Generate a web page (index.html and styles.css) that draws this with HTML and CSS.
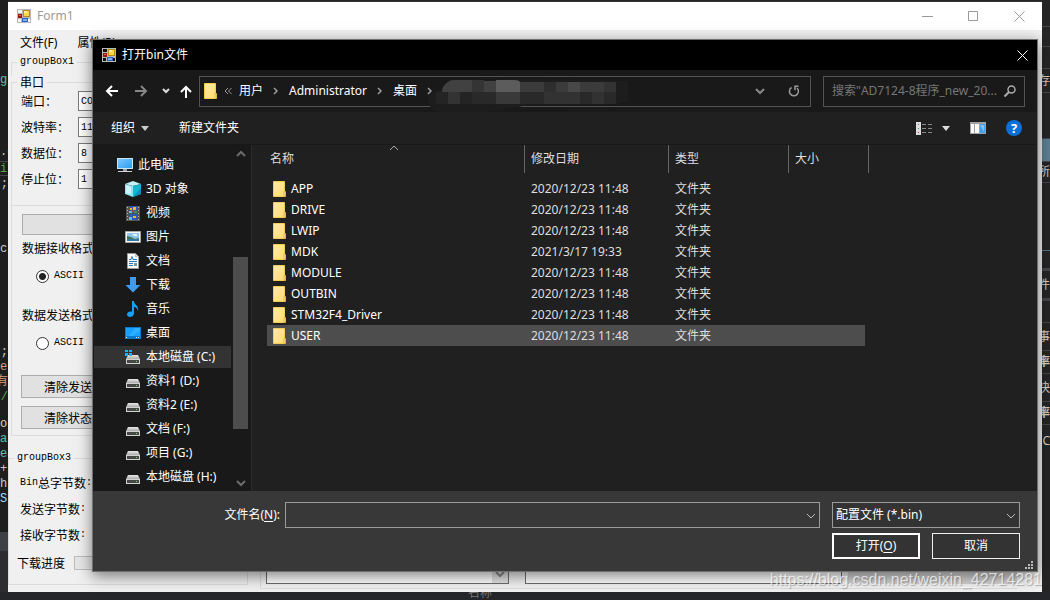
FILE: index.html
```html
<!DOCTYPE html>
<html lang="zh-CN">
<head>
<meta charset="utf-8">
<title>打开bin文件</title>
<link rel="stylesheet" href="styles.css">
</head>
<body>
<svg class="defs" aria-hidden="true">
  <defs>
    <linearGradient id="gFolder" x1="0" y1="0" x2="1" y2="1"><stop offset="0" stop-color="#ffeba8"/><stop offset="1" stop-color="#ffdc70"/></linearGradient>
    <linearGradient id="gScreen" x1="0" y1="0" x2="1" y2="1"><stop offset="0" stop-color="#7cc8ff"/><stop offset="1" stop-color="#2c9df0"/></linearGradient>
    <linearGradient id="gDrive" x1="0" y1="0" x2="0" y2="1"><stop offset="0" stop-color="#e8e8e8"/><stop offset="1" stop-color="#a9a9a9"/></linearGradient>
  </defs>
  <symbol id="app" viewBox="0 0 14 14">
    <path fill="#b9b9b9" d="M0 0h14v14H0z"/><path fill="#101010" d="M1 1h4v3H1zM1 10h3v3H1zM11 10h2v3h-2z"/>
    <path fill="#b78a10" d="M6 1h7v7H6z"/><path fill="#ffd84a" d="M7 2h5v5H7z"/><path fill="#fff0a0" d="M7 2h3v2H7z"/>
    <path fill="#9c1512" d="M1 5h4v4H1z"/><path fill="#e06a50" d="M2 6h2v1H2z"/>
    <path fill="#2c62c4" d="M5 9h6v4H5z"/><path fill="#79aef5" d="M6 10h4v2H6z"/>
  </symbol>
  <symbol id="applight" viewBox="0 0 14 14">
    <path fill="#b9b9b9" d="M0 0h14v14H0z"/><path fill="#f4f4f4" d="M1 1h4v3H1zM1 10h3v3H1zM11 10h2v3h-2z"/>
    <path fill="#b78a10" d="M6 1h7v7H6z"/><path fill="#ffd84a" d="M7 2h5v5H7z"/><path fill="#fff0a0" d="M7 2h3v2H7z"/>
    <path fill="#9c1512" d="M1 5h4v4H1z"/><path fill="#e06a50" d="M2 6h2v1H2z"/>
    <path fill="#2c62c4" d="M5 9h6v4H5z"/><path fill="#79aef5" d="M6 10h4v2H6z"/>
  </symbol>
  <symbol id="folder" viewBox="0 0 13 16">
    <path fill="url(#gFolder)" stroke="#f3cd50" d="M.5.5h11v15H.5z"/><path fill="#ffe79a" stroke="#dfb640" d="M11 10.500h1.500v5H11z"/>
  </symbol>
  <symbol id="pc" viewBox="0 0 16 16">
    <path fill="#c9e6f8" d="M0 1h16v11H0z"/><path fill="url(#gScreen)" d="M1 2h14v9H1z"/><path fill="#9aa4ac" d="M6 12h4v2H6z"/><path fill="#cdd3d7" d="M1 14h14v1H1z"/>
  </symbol>
  <symbol id="cube" viewBox="0 0 16 16">
    <path fill="#bff1f6" d="M0 3l8-3 8 3-8 2z"/><path fill="#8ee6ee" d="M0 3l8 2v11l-8-3z"/><path fill="#e3fafc" d="M1 4l5 2v7l-5-1z" opacity=".7"/><path fill="#14b8cf" d="M16 3L8 5v11l8-3z"/><path fill="#0a8fc4" d="M16 7l-8 9 8-3z"/>
  </symbol>
  <symbol id="video" viewBox="0 0 16 16">
    <path fill="#545454" d="M1 1h14v15H1z"/><path fill="#b8b8b8" d="M2 2h1v1H2zM2 5h1v1H2zM2 8h1v1H2zM2 11h1v1H2zM2 14h1v1H2zM13 2h1v1h-1zM13 5h1v1h-1zM13 8h1v1h-1zM13 11h1v1h-1zM13 14h1v1h-1z"/>
    <path fill="#3157b4" d="M4 1h8v7H4zM4 9h8v6H4z"/><path fill="#f0bc24" d="M5 3h2v2H5zM8 2h3v3H8zM8 11h3v2H8z"/><path fill="#be3c2c" d="M7 5h2v2H7z"/><path fill="#59c2ed" d="M4 6h3v2H4zM4 12h3v3H4z"/><path fill="#3c9848" d="M9 6h3v2H9z"/>
  </symbol>
  <symbol id="picture" viewBox="0 0 16 16">
    <path fill="#f6f6f6" stroke="#a5a5a5" d="M.5 2.500h15v11H.5z"/><path fill="#8fc5ed" d="M2 4h12v8H2z"/><path fill="#3b7454" d="M2 7l4 1 4 2 4-1v3H2z"/><path fill="#3676a2" d="M2 10h12v2H2z"/><path fill="#e8f4fc" d="M7 5h5v2H9z"/>
  </symbol>
  <symbol id="document" viewBox="0 0 16 16">
    <path fill="#fafafa" stroke="#9b9b9b" d="M2.500.5h8l3 3v12h-11z"/><path fill="#bbb" d="M10 1v3h3z"/><path stroke="#247ac4" fill="none" d="M4 6.500h2l1-3 1 3h4M4 8.500h8M4 10.500h4M4 12.500h4"/><path fill="#6d9a9c" d="M9 10h3v3H9z"/>
  </symbol>
  <symbol id="download" viewBox="0 0 16 16"><path fill="#3d9cf0" d="M5 0h6v8h4.500L8 15.500.5 8H5z"/></symbol>
  <symbol id="music" viewBox="0 0 16 16"><path fill="#18a0f2" d="M7 0h2c0 4 5 4 4 10-1-3-2-4-4-4v6c0 5-7 5-7 1.500C2 11 5 10 7 11z"/></symbol>
  <symbol id="desktop" viewBox="0 0 16 16"><path fill="#0c7bd0" d="M0 2h16v12H0z"/><path fill="#15a2ff" d="M1 3h14v8H1z"/><path fill="#4bb9ff" d="M10 3h5v3l-7 5H4z" opacity=".5"/><path fill="#d4f0ff" d="M1 12h1v1H1zM11 12h1v1h-1zM13 12h1v1h-1z"/></symbol>
  <symbol id="drive" viewBox="0 0 16 16"><path fill="url(#gDrive)" d="M3 6h10l2 4H1z"/><path fill="#d2d2d2" d="M1 10h14v5H1z"/><path fill="#474747" d="M2 11h12v3H2z"/><path fill="#52e852" d="M11 12h1v1h-1z"/></symbol>
  <symbol id="sysdrive" viewBox="0 0 16 16"><use href="#drive"/><path fill="#1eb4f4" d="M0 1h3v2H0zM4 1h3v2H4zM0 4h3v3H0zM4 4h3v3H4z"/></symbol>
  <symbol id="down" viewBox="0 0 10 6"><path fill="none" stroke="currentColor" d="M1 1l4 4 4-4"/></symbol>
  <symbol id="up" viewBox="0 0 10 6"><path fill="none" stroke="currentColor" d="M1 5l4-4 4 4"/></symbol>
  <symbol id="downbold" viewBox="0 0 10 7"><path fill="none" stroke="currentColor" stroke-width="2" d="M1 1l4 4 4-4"/></symbol>
  <symbol id="upbold" viewBox="0 0 10 7"><path fill="none" stroke="currentColor" stroke-width="2" d="M1 6l4-4 4 4"/></symbol>
  <symbol id="right" viewBox="0 0 6 8"><path fill="none" stroke="currentColor" stroke-width="1.500" d="M1 1l3 3-3 3"/></symbol>
  <symbol id="cross" viewBox="0 0 11 11"><path fill="none" stroke="currentColor" d="M.5.5l10 10M10.500.5l-10 10"/></symbol>
</svg>

<div class="desktop">
  <div class="editor">
    <div class="code teal first">g(</div>
    <div class="code white after">.c</div>
    <div class="code green current">il</div>
    <div class="code white end">;</div>
    <div class="code white far">c</div>
    <div class="code white farther end">;</div>
    <div class="code orange">er</div>
    <div class="code orange end">有</div>
    <div class="code green end">/</div>
    <div class="code yellow gap">ou</div>
    <div class="code teal">an</div>
    <div class="code teal">ea</div>
    <div class="code white">+(</div>
    <div class="code white">h;</div>
    <div class="code blue">St</div>
    <div class="band"></div>
    <div class="dock"></div>
  </div>

  <main class="form">
    <header class="form-title">
      <svg class="appicon"><use href="#applight"/></svg><span>Form1</span>
      <div class="window-buttons">
        <button aria-label="最小化"><svg width="11" height="11"><path stroke="currentColor" d="M0 5.500h11"/></svg></button>
        <button aria-label="最大化"><svg width="11" height="11"><path fill="none" stroke="currentColor" d="M.5.5h9v9H.5z"/></svg></button>
        <button aria-label="关闭"><svg width="11" height="11"><use href="#cross"/></svg></button>
      </div>
    </header>
    <nav class="menu"><button>文件(F)</button><button>属性(P)</button></nav>
    <div class="form-body">
      <div class="settings">
        <fieldset class="box box-outer"><legend class="mono">groupBox1</legend></fieldset>
        <fieldset class="box serial">
          <legend>串口</legend>
          <div class="field"><label for="port">端口：</label><input id="port" value="COM1"></div>
          <div class="field"><label for="baud">波特率：</label><input id="baud" value="115200"></div>
          <div class="field"><label for="bits">数据位：</label><input id="bits" value="8"></div>
          <div class="field"><label for="stop">停止位：</label><input id="stop" value="1"></div>
        </fieldset>
        <div class="formats">
          <button class="classic" aria-label="打开串口"></button>
          <p class="caption">数据接收格式</p>
          <label class="radio"><input type="radio" name="rx" checked><span class="mono">ASCII</span></label>
          <p class="caption caption-next">数据发送格式</p>
          <label class="radio"><input type="radio" name="tx"><span class="mono">ASCII</span></label>
          <button class="classic clear">清除发送</button>
          <button class="classic state">清除状态</button>
        </div>
        <fieldset class="box counters">
          <legend class="mono">groupBox3</legend>
          <div class="count"><span class="mono">Bin</span>总字节数<span class="mono">:</span></div>
          <div class="count">发送字节数<span class="mono">:</span></div>
          <div class="count">接收字节数<span class="mono">:</span></div>
          <div class="count download"><span>下载进度</span><div class="track"></div></div>
        </fieldset>
      </div>
      <div class="logs">
        <div class="log log-a"><div class="log-scroll"><svg width="10" height="7"><use href="#downbold"/></svg></div></div>
        <div class="log log-b"></div>
        <button class="send">Send发送</button>
      </div>
    </div>
  </main>

  <aside class="panel">
    <div class="cell c1"></div><div class="cell c2"></div><div class="cell c3"></div><div class="cell c4">存</div>
    <div class="cell c5"></div><div class="cell c6"></div><div class="cell c7">所</div><div class="cell c8"></div>
    <div class="cell c9"></div><div class="cell c10">件</div><div class="cell c11"></div><div class="cell c12">事</div>
    <div class="cell c13">率</div><div class="cell c12">快</div><div class="cell c13">率</div><div class="cell c14">C</div>
  </aside>
  <footer class="taskline"><span>名称</span></footer>

  <section class="dialog" role="dialog" aria-labelledby="dlg-title">
    <header class="dialog-title">
      <svg class="appicon"><use href="#app"/></svg><span id="dlg-title">打开bin文件</span>
      <button class="close" aria-label="关闭"><svg width="11" height="11"><use href="#cross"/></svg></button>
    </header>

    <div class="navbar">
      <div class="arrows">
        <button aria-label="后退"><svg width="14" height="12"><path fill="none" stroke="#fff" stroke-width="2" d="M13 6H2M7 1L2 6l5 5"/></svg></button>
        <button aria-label="前进"><svg width="14" height="12"><path fill="none" stroke="#868686" stroke-width="2" d="M0 6h11M6 1l5 5-5 5"/></svg></button>
        <button aria-label="最近"><svg width="8" height="6"><path fill="none" stroke="#ddd" stroke-width="2" d="M1 1l3 3 3-3"/></svg></button>
        <button aria-label="上移"><svg width="12" height="13"><path fill="none" stroke="#fff" stroke-width="2" d="M6 13V2M1 7l5-5 5 5"/></svg></button>
      </div>
      <div class="address">
        <svg class="folder"><use href="#folder"/></svg>
        <svg class="laquo" width="8" height="8"><path fill="none" stroke="#9a9a9a" d="M4 1L1 4l3 3M7.500 1l-3 3 3 3"/></svg>
        <button class="crumb">用户</button><svg class="sep"><use href="#right"/></svg>
        <button class="crumb">Administrator</button><svg class="sep"><use href="#right"/></svg>
        <button class="crumb">桌面</button><svg class="sep"><use href="#right"/></svg>
        <svg class="mosaic" viewBox="0 0 212 36" aria-hidden="true">
          <path fill="#1d1d1d" d="M0 21q0-6 10-8l10-10Q100 0 200 3v20l-10 3-90 1q-20 4-42 7H12Q0 32 0 21z"/>
          <path fill="#414141" d="M20 4q2-2 5-2h19v12H14q0-6 6-10zM56 3h12v11H56z"/>
          <path fill="#343434" d="M44 2h12v12H44z"/><path fill="#5c5c5c" d="M68 2h18q5 0 6 2v10H68z"/>
          <path fill="#3b3b3b" d="M92 4h24v10H92zM128 4h60v10h-60z"/><path fill="#2e2e2e" d="M116 4h12v10h-12z"/>
          <path fill="#484848" d="M140 4h12v10h-12z"/><path fill="#333" d="M176 4h12v10h-12z"/>
          <path fill="#242424" d="M8 14h84v12H8z"/><path fill="#333" d="M20 14h12v12H20z"/><path fill="#292929" d="M44 14h24v12H44zM92 14h96v12H92z"/>
          <path fill="#393939" d="M68 14h24v12H68z"/><path fill="#323232" d="M116 14h36v12h-36zM164 14h12v12h-12z"/>
        </svg>
        <button class="drop" aria-label="历史"><svg width="10" height="7"><use href="#downbold"/></svg></button>
        <button class="refresh" aria-label="刷新"><svg width="12" height="12"><path fill="none" stroke="#999" stroke-width="1.500" d="M3.500 2.500A4.500 4.500 0 1 0 9 3M10.500 1.200H7v4"/></svg></button>
      </div>
      <div class="search">
        <input type="text" aria-label="搜索" placeholder='搜索"AD7124-8程序_new_20...'>
        <svg width="12" height="12"><circle cx="7.500" cy="4.500" r="3.500" fill="none" stroke="#aaa" stroke-width="1.500"/><path stroke="#aaa" stroke-width="2" d="M5 7l-4.500 4.500"/></svg>
      </div>
    </div>

    <div class="toolbar">
      <button>组织<svg width="8" height="5"><path fill="#ccc" d="M0 0h8L4 5z"/></svg></button>
      <button>新建文件夹</button>
      <div class="tools">
        <button class="view" aria-label="更改视图"><svg width="16" height="13"><path fill="#ddd" d="M0 0h5v13H0z"/><path fill="#3e7fc0" d="M2 2h1v1H2zM2 6h1v1H2z"/><path fill="#a33" d="M2 10h1v1H2z"/><path stroke="#888" d="M6 2.500h4M12 2.500h4M6 6.500h4M12 6.500h4M6 10.500h4M12 10.500h4"/></svg><svg width="8" height="5"><path fill="#ddd" d="M0 0h8L4 5z"/></svg></button>
        <button aria-label="预览窗格"><svg width="16" height="12"><path fill="#a2a2a2" d="M0 0h16v12H0z"/><path fill="#fafafa" d="M1 2h3v9H1zM5 2h4v9H5z"/><path fill="#41a0ea" d="M10 2h5v9h-5z"/><path fill="#80c4fb" d="M10 3h4v7z"/></svg></button>
        <button class="help" aria-label="帮助">?</button>
      </div>
    </div>

    <div class="explorer">
      <nav class="tree">
        <ul>
          <li class="root"><svg><use href="#pc"/></svg>此电脑</li>
          <li><svg><use href="#cube"/></svg>3D 对象</li>
          <li><svg><use href="#video"/></svg>视频</li>
          <li><svg><use href="#picture"/></svg>图片</li>
          <li><svg><use href="#document"/></svg>文档</li>
          <li><svg><use href="#download"/></svg>下载</li>
          <li><svg><use href="#music"/></svg>音乐</li>
          <li><svg><use href="#desktop"/></svg>桌面</li>
          <li class="active"><svg><use href="#sysdrive"/></svg>本地磁盘 (C:)</li>
          <li><svg><use href="#drive"/></svg>资料1 (D:)</li>
          <li><svg><use href="#drive"/></svg>资料2 (E:)</li>
          <li><svg><use href="#drive"/></svg>文档 (F:)</li>
          <li><svg><use href="#drive"/></svg>项目 (G:)</li>
          <li><svg><use href="#drive"/></svg>本地磁盘 (H:)</li>
        </ul>
        <div class="scrollbar">
          <svg width="10" height="7"><use href="#upbold"/></svg>
          <div class="rail"><div class="thumb"></div></div>
          <svg width="10" height="7"><use href="#downbold"/></svg>
        </div>
      </nav>
      <div class="files">
        <svg class="sort" width="10" height="6"><use href="#up"/></svg>
        <table>
          <colgroup><col class="col-name"><col class="col-date"><col class="col-type"><col class="col-size"></colgroup>
          <thead><tr><th>名称</th><th>修改日期</th><th>类型</th><th>大小</th></tr></thead>
          <tbody>
            <tr class="spacer"><td colspan="4"></td></tr>
            <tr><td><svg class="folder"><use href="#folder"/></svg>APP</td><td>2020/12/23 11:48</td><td>文件夹</td><td></td></tr>
            <tr><td><svg class="folder"><use href="#folder"/></svg>DRIVE</td><td>2020/12/23 11:48</td><td>文件夹</td><td></td></tr>
            <tr><td><svg class="folder"><use href="#folder"/></svg>LWIP</td><td>2020/12/23 11:48</td><td>文件夹</td><td></td></tr>
            <tr><td><svg class="folder"><use href="#folder"/></svg>MDK</td><td>2021/3/17 19:33</td><td>文件夹</td><td></td></tr>
            <tr><td><svg class="folder"><use href="#folder"/></svg>MODULE</td><td>2020/12/23 11:48</td><td>文件夹</td><td></td></tr>
            <tr><td><svg class="folder"><use href="#folder"/></svg>OUTBIN</td><td>2020/12/23 11:48</td><td>文件夹</td><td></td></tr>
            <tr><td><svg class="folder"><use href="#folder"/></svg>STM32F4_Driver</td><td>2020/12/23 11:48</td><td>文件夹</td><td></td></tr>
            <tr class="selected"><td><svg class="folder"><use href="#folder"/></svg>USER</td><td>2020/12/23 11:48</td><td>文件夹</td><td></td></tr>
          </tbody>
        </table>
      </div>
    </div>

    <footer class="actions">
      <label for="filename">文件名(<u>N</u>):</label>
      <div class="combo"><input id="filename" type="text"><svg width="10" height="6"><use href="#down"/></svg></div>
      <div class="choices">
        <div class="combo"><select aria-label="文件类型"><option>配置文件 (*.bin)</option></select><svg width="10" height="6"><use href="#down"/></svg></div>
        <div class="pair"><button class="primary">打开(<u>O</u>)</button><button>取消</button></div>
      </div>
      <svg class="grip" width="9" height="9"><path fill="#bbb" d="M6 0h2v2H6zM3 3h2v2H3zM6 3h2v2H6zM0 6h2v2H0zM3 6h2v2H3zM6 6h2v2H6z"/></svg>
    </footer>
  </section>
  <div class="watermark">https://blog.csdn.net/weixin_42714281</div>
</div>
</body>
</html>
```
FILE: styles.css
```css
* { box-sizing: border-box; }
body { margin: 0; font: 12px/16px "Noto Sans", "Noto Sans CJK SC", sans-serif; }
button, input, select { font: inherit; color: inherit; margin: 0; padding: 0; border: 0; background: none; }
button { display: flex; align-items: center; justify-content: center; }
ul, p, fieldset, legend { margin: 0; padding: 0; }
svg { display: block; flex: none; }
.defs { position: absolute; width: 0; height: 0; }

.desktop {
  position: relative;
  display: grid;
  grid-template: minmax(0, 1fr) 8px / 8px minmax(0, 1fr) 8px;
  height: 100vh;
  overflow: hidden;
  background: #252629;
}

/* editor behind the form */
.editor { display: flex; flex-direction: column; overflow: hidden; background: #1e1e1e; font-family: "Liberation Mono", "Noto Sans CJK SC", monospace; }
.code { display: flex; flex: none; height: 15px; line-height: 15px; white-space: nowrap; }
.end { justify-content: flex-end; }
.first { margin-top: 73px; }
.after { margin-top: 57px; }
.far { margin-top: 50px; }
.farther { margin-top: 88px; }
.gap { margin-top: 12px; }
.current { border: solid #444; border-width: 1px 0; margin: 1px 0; }
.teal { color: #4ec9b0; }
.white { color: #c8c8c8; }
.green { color: #57a64a; }
.orange { color: #d69d85; }
.yellow { color: #dcdcaa; }
.blue { color: #9cdcfe; }
.band { height: 19px; margin-top: 25px; flex: none; background: #3f3f46; }
.dock { flex: 1; background: #2d2d30; }

/* form window */
.form { display: flex; flex-direction: column; margin-top: 1px; min-height: 0; background: #f0f0f0; color: #000; border-top: 1px solid #333; }
.form-title { display: flex; align-items: center; gap: 6px; height: 28px; padding-left: 9px; background: #fff; color: #999; font-size: 12px; }
.appicon { width: 14px; height: 14px; }
.window-buttons { display: flex; margin-left: auto; }
.window-buttons button { width: 46px; height: 28px; }
.menu { display: flex; gap: 20px; height: 26px; padding: 0 12px; }
.form-body { display: flex; flex: 1; min-height: 0; }
.settings { flex: none; width: 240px; font-family: "Noto Sans CJK SC", sans-serif; }
.mono { font: 10px/12px "Liberation Mono", monospace; }
.box { border: 1px solid #dcdcdc; margin-left: 3px; }
.box legend { height: 12px; line-height: 12px; margin-left: 5px; padding: 0 3px; }
.box-outer { height: 20px; border-bottom: 0; }
.serial { padding-bottom: 13px; }
.field { display: flex; align-items: center; height: 26px; padding-left: 9px; }
.field label { width: 57px; }
.field input { width: 130px; height: 20px; padding-left: 2px; border: 1px solid #7a7a7a; background: #fff; font: 10px "Liberation Mono", monospace; }
.formats { display: flex; flex-direction: column; margin-left: 3px; padding: 8px 10px 6px; border: solid #dcdcdc; border-width: 0 1px 1px; }
.classic { height: 21px; border: 1px solid #adadad; background: #e1e1e1; }
.caption { height: 16px; margin-top: 5px; }
.caption-next { margin-top: 23px; }
.radio { display: flex; align-items: center; gap: 5px; height: 16px; margin-top: 12px; padding-left: 14px; }
.radio .mono { line-height: 16px; }
.radio input { appearance: none; width: 13px; height: 13px; border: 1px solid #333; border-radius: 50%; background: #fff; }
.radio input:checked { background: radial-gradient(circle, #222 0 3px, #fff 4px); }
.clear, .state { height: 23px; justify-content: flex-start; padding-left: 22px; margin-left: -1px; }
.clear { margin-top: 24px; }
.state { margin-top: 8px; }
.counters { margin: 16px 0 0; padding: 6px 0 6px 8px; }
.counters legend { margin-left: -3px; }
.counters .count { display: flex; align-items: center; height: 26px; padding-left: 3px; }
.counters .download { height: 30px; padding-left: 0; gap: 9px; }
.track { flex: 1; height: 14px; margin-right: 8px; border: 1px solid #bcbcbc; background: #e6e6e6; }
.logs { display: flex; flex: 1; align-items: flex-end; gap: 6px; margin: 0 25px 3px 12px; padding: 0 0 4px 5px; border: solid #dcdcdc; border-width: 0 0 1px 1px; }
.log { display: flex; align-items: flex-end; justify-content: flex-end; height: 80px; border: 1px solid #6c6c6c; background: #fff; }
.log-a { flex: 243; margin-right: 10px; }
.log-b { flex: 317; }
.log-scroll { display: flex; justify-content: center; width: 16px; padding: 4px 0 5px; background: #e2e2e2; color: #888; }
.send { flex: 170; height: 40px; background: #d2d2d2; color: #888; }

/* side panel and bottom edge */
.panel { display: flex; flex-direction: column; overflow: hidden; background: #252526; color: #d0d0d0; }
.cell { display: flex; align-items: center; justify-content: flex-end; flex: none; border-bottom: 1px solid #46464a; }
.c1 { height: 27px; } .c2 { height: 20px; } .c3 { height: 22px; } .c4 { height: 24px; }
.c5 { height: 46px; } .c6 { height: 23px; background: #5b7f92; } .c7 { height: 21px; } .c8 { height: 68px; border-color: #52758a; }
.c9 { height: 20px; border-bottom-width: 3px; } .c10 { height: 30px; border-bottom-width: 3px; }
.c11 { height: 22px; } .c12 { height: 28px; } .c13 { height: 23px; font-weight: 700; } .c14 { height: 32px; border: 0; }
.taskline { grid-column: 1 / -1; overflow: hidden; padding-left: 468px; color: #77777a; line-height: 2px; }

/* open-file dialog */
.dialog {
  position: absolute;
  inset: 39px 12px 28px 92px;
  display: flex;
  flex-direction: column;
  border: 1px solid #707070;
  background: #202020;
  color: #fff;
  box-shadow: 0 4px 14px rgba(0, 0, 0, .5);
}
.dialog-title { display: flex; align-items: center; gap: 6px; height: 30px; flex: none; padding-left: 9px; background: #000; }
.close { width: 30px; height: 28px; margin-left: auto; }
.navbar { display: flex; align-items: center; height: 42px; flex: none; padding: 0 12px; background: #191919; }
.arrows { display: flex; align-items: center; width: 94px; }
.arrows button { width: 14px; height: 20px; }
.arrows button:nth-child(2) { margin-left: 16px; }
.arrows button:nth-child(3) { margin-left: 10px; }
.arrows button:nth-child(4) { margin-left: 6px; }
.address { position: relative; display: flex; align-items: center; flex: 1; height: 31px; padding-left: 4px; border: 1px solid #535353; }
.folder { width: 13px; height: 16px; }
.laquo { margin: 0 7px; }
.sep { width: 6px; height: 8px; margin: 0 10px; color: #9a9a9a; }
.mosaic { position: absolute; left: 228px; top: 1px; width: 212px; height: 36px; }
.drop { width: 28px; height: 29px; margin-left: auto; color: #888; }
.refresh { width: 32px; height: 29px; margin-left: 4px; }
.search { display: flex; align-items: center; width: 202px; height: 31px; margin-left: 12px; padding: 0 8px; border: 1px solid #535353; }
.search input { flex: 1; min-width: 0; outline: 0; }
.search input::placeholder { color: #777; opacity: 1; }
.toolbar { display: flex; align-items: center; gap: 30px; height: 33px; flex: none; padding: 0 15px 0 18px; border-bottom: 1px solid #181818; }
.toolbar button { gap: 6px; }
.tools { display: flex; align-items: center; gap: 20px; margin-left: auto; }
.tools .view { gap: 10px; }
.tools .help { width: 16px; height: 16px; border-radius: 50%; background: #0a70d8; font-weight: 700; font-size: 13px; }
.explorer { display: flex; flex: 1; min-height: 0; }
.tree { display: flex; width: 159px; flex: none; background: #191919; border-right: 1px solid #2b2b2b; }
.tree ul { display: flex; flex-direction: column; gap: 2px; flex: 1; padding: 9px 2px 0 1px; list-style: none; overflow: hidden; }
.tree li { display: flex; align-items: center; gap: 5px; height: 22px; flex: none; padding-left: 31px; white-space: nowrap; }
.tree .root { padding-left: 23px; }
.tree .active { background: #333; }
.tree li svg { width: 16px; height: 16px; }
.scrollbar { display: flex; flex-direction: column; align-items: center; width: 15px; margin-right: 3px; padding: 5px 0 4px; color: #6c6c6c; }
.rail { display: flex; flex-direction: column; flex: 1; width: 100%; padding: 100px 0 51px; }
.thumb { flex: 1; background: #4d4d4d; }
.files { position: relative; flex: 1; padding-left: 15px; }
.sort { position: absolute; left: 137px; top: 0; color: #aaa; }
table { width: 602px; border-collapse: separate; border-spacing: 0; table-layout: fixed; }
.col-name { width: 258px; } .col-date { width: 144px; } .col-type { width: 120px; } .col-size { width: 80px; }
th { height: 28px; padding: 0 6px; text-align: left; font-weight: 400; color: #dedede; border-right: 1px solid #636363; }
th:first-child { padding-left: 3px; }
td { height: 21px; padding: 0 6px; color: #dedede; background-clip: padding-box; }
td:first-child { display: flex; align-items: center; gap: 5px; color: #fff; }
td:last-child { border-right: 4px solid transparent; }
.spacer td { display: table-cell; height: 5px; padding: 0; }
.selected td { background-color: #4d4d4d; }
.actions { position: relative; display: flex; flex: none; align-items: flex-start; height: 80px; padding: 11px 17px 0 0; background: #383838; }
.actions label { width: 187px; margin-right: 5px; line-height: 26px; text-align: right; }
.combo { position: relative; flex: 1; }
.combo input, .combo select { display: block; width: 100%; height: 26px; border: 1px solid #9b9b9b; border-radius: 0; outline: 0; }
.combo select { appearance: none; padding-left: 3px; background: #333; }
.combo svg { position: absolute; right: 4px; top: 11px; color: #bbb; }
.choices { width: 188px; margin-left: 12px; }
.pair { display: grid; grid-template-columns: 1fr 1fr; gap: 12px; margin-top: 5px; }
.pair button { height: 26px; border: 1px solid #eee; background: #333; }
.pair .primary { border: 2px solid #fff; }
u { text-underline-offset: 2px; }
.pair button, .actions label { white-space: nowrap; }
.grip { position: absolute; right: 3px; bottom: 1px; }
.watermark { position: absolute; right: 8px; bottom: 10px; font: 16px/20px "Liberation Sans", sans-serif; color: rgba(255, 255, 255, .7); text-shadow: 1px 1px 1px rgba(0, 0, 0, .25); }
```
